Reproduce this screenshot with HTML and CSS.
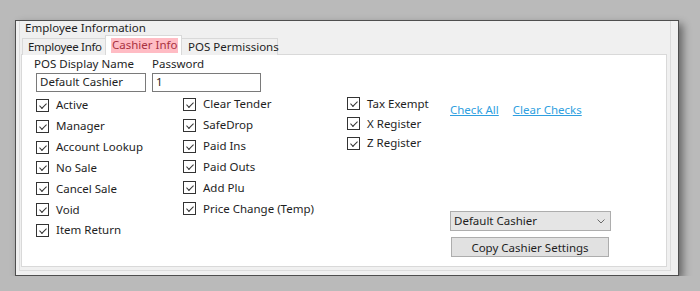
FILE: index.html
```html
<!DOCTYPE html>
<html lang="en">
<head>
    <meta charset="UTF-8">
    <meta name="viewport" content="width=device-width, initial-scale=1.0">
    <title>Employee Information</title>
    <link rel="stylesheet" href="styles.css">
</head>
<body>
    <div class="window">
        <div class="group">
            <div class="group-title">Employee Information</div>

            <div class="tabs">
                <div class="tab tab-first">Employee Info</div>
                <div class="tab tab-active"><span class="mark">Cashier Info</span></div>
                <div class="tab tab-last">POS Permissions</div>
            </div>

            <div class="panel">
                <div class="fields">
                    <div class="field field-name">
                        <label class="field-label">POS Display Name</label>
                        <div class="textbox">Default Cashier</div>
                    </div>
                    <div class="field field-pass">
                        <label class="field-label">Password</label>
                        <div class="textbox">1</div>
                    </div>
                </div>

                <div class="body">
                    <div class="col col-1">
                        <div class="check"><span class="box"></span>Active</div>
                        <div class="check"><span class="box"></span>Manager</div>
                        <div class="check"><span class="box"></span>Account Lookup</div>
                        <div class="check"><span class="box"></span>No Sale</div>
                        <div class="check"><span class="box"></span>Cancel Sale</div>
                        <div class="check"><span class="box"></span>Void</div>
                        <div class="check"><span class="box"></span>Item Return</div>
                    </div>
                    <div class="col col-2">
                        <div class="check"><span class="box"></span>Clear Tender</div>
                        <div class="check"><span class="box"></span>SafeDrop</div>
                        <div class="check"><span class="box"></span>Paid Ins</div>
                        <div class="check"><span class="box"></span>Paid Outs</div>
                        <div class="check"><span class="box"></span>Add Plu</div>
                        <div class="check"><span class="box"></span>Price Change (Temp)</div>
                    </div>
                    <div class="col col-3">
                        <div class="check"><span class="box"></span>Tax Exempt</div>
                        <div class="check"><span class="box"></span>X Register</div>
                        <div class="check"><span class="box"></span>Z Register</div>
                    </div>
                    <div class="side">
                        <div class="links">
                            <a href="#" class="link link-check">Check All</a>
                            <a href="#" class="link">Clear Checks</a>
                        </div>
                        <div class="copy">
                            <div class="combo">
                                <span>Default Cashier</span>
                                <svg class="chevron" width="8" height="5" viewBox="0 0 8 5">
                                    <polyline points="0.5,0.5 4,4 7.5,0.5" fill="none" stroke="#6a6a6a" stroke-width="1"/>
                                </svg>
                            </div>
                            <button class="btn">Copy Cashier Settings</button>
                        </div>
                    </div>
                </div>
            </div>
        </div>
    </div>
</body>
</html>
```

FILE: styles.css
```css
* {
    margin: 0;
    padding: 0;
    box-sizing: border-box;
}

body {
    font-family: 'Noto Sans', 'Liberation Sans', sans-serif;
    font-size: 11.5px;
    line-height: 14px;
    color: #1e1e1e;
    background: #bababa;
    padding: 20px 0 0 15px;
    white-space: nowrap;
}

.window {
    width: 664px;
    height: 256px;
    background: #f0f0f0;
    border: 1px solid #4e4e4e;
    box-shadow: 4px 4px 8px rgba(0, 0, 0, 0.45);
    padding: 0 7px 4px 3px;
}

.group {
    height: 100%;
    border: 1px solid #dcdcdc;
    border-top: none;
    display: flex;
    flex-direction: column;
}

.group-title {
    margin-left: 5px;
    height: 14px;
}

/* tabs */
.tabs {
    display: flex;
    align-items: flex-end;
    height: 20px;
    padding-left: 2px;
    position: relative;
    z-index: 1;
}

.tab {
    height: 17px;
    background: #f0f0f0;
    border: 1px solid #d9d9d9;
    border-bottom: none;
    padding-left: 5px;
    line-height: 16px;
}

.tab-first {
    width: 84px;
    letter-spacing: -0.3px;
}

.tab-active {
    width: 77px;
    height: 20px;
    background: #fff;
    margin-left: -1px;
    padding-left: 5px;
    padding-top: 2px;
    line-height: 14px;
}

.mark {
    display: inline-block;
    background: #ffbcc4;
    color: #a8323f;
    padding: 0 1px;
    height: 15px;
}

.tab-last {
    width: 97px;
    margin-left: -1px;
    padding-left: 6px;
}

/* panel */
.panel {
    flex: 1;
    margin: -1px 3px 3px 1px;
    background: #fff;
    border: 1px solid #d9d9d9;
    display: flex;
    flex-direction: column;
    padding: 2px 0 0 14px;
}

.fields {
    display: flex;
}

.field {
    display: flex;
    flex-direction: column;
}

.field-name {
    width: 116px;
}

.field-name .field-label {
    margin-left: -2px;
}

.field-label {
    height: 16px;
}

.textbox {
    height: 19px;
    border: 1px solid #7a7a7a;
    padding: 0 0 2px 3px;
    line-height: 15px;
}

.field-name .textbox {
    width: 110px;
}

.field-pass .textbox {
    width: 109px;
}

/* checkbox columns */
.body {
    flex: 1;
    display: flex;
    padding-top: 3px;
}

.col-1 {
    width: 147px;
}

.col-2 {
    width: 164px;
    margin-top: -1px;
}

.col-3 {
    width: 102px;
    margin-top: -1px;
}

.check {
    height: 20.83px;
    display: flex;
    align-items: center;
    gap: 7px;
}

.col-3 .check {
    height: 19.8px;
}

.box {
    width: 13px;
    height: 13px;
    border: 1px solid #333;
    background: #fff;
    position: relative;
    flex-shrink: 0;
}

.box::after {
    content: '';
    position: absolute;
    left: 2px;
    top: 1px;
    width: 6px;
    height: 3px;
    border-left: 1px solid #333;
    border-bottom: 1px solid #333;
    transform: translate(0.5px, 2px) rotate(-45deg);
}

/* right side */
.side {
    flex: 1;
    display: flex;
    flex-direction: column;
    justify-content: space-between;
    padding-bottom: 9px;
}

.links {
    display: flex;
    gap: 14px;
    padding-top: 8px;
    margin-left: 1px;
}

.link {
    color: #2f9fe0;
    text-decoration: underline;
}

.copy {
    display: flex;
    flex-direction: column;
    gap: 6px;
}

.combo {
    width: 161px;
    height: 20px;
    margin-left: 1px;
    background: #e5e5e5;
    border: 1px solid #adadad;
    display: flex;
    align-items: center;
    justify-content: space-between;
    padding: 0 5px 0 3px;
}

.btn {
    width: 158px;
    height: 20px;
    margin-left: 2px;
    background: #e1e1e1;
    border: 1px solid #adadad;
    font-family: inherit;
    font-size: inherit;
    color: #1e1e1e;
}
```
